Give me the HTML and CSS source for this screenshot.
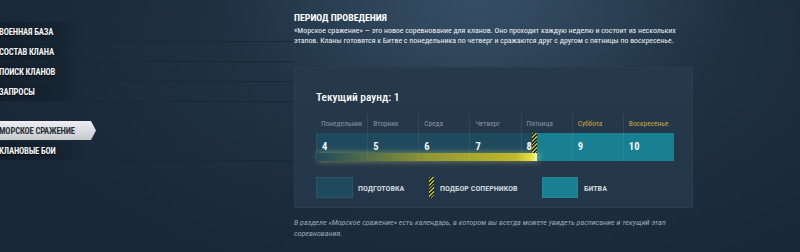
FILE: index.html
```html
<!DOCTYPE html>
<html lang="ru">
<head>
<meta charset="utf-8">
<title>Морское сражение</title>
<link rel="stylesheet" href="styles.css">
</head>
<body>
<div class="page">
  <nav class="nav">
    <div class="nav-group">
      <a class="nav-item">ВОЕННАЯ БАЗА</a>
      <a class="nav-item">СОСТАВ КЛАНА</a>
      <a class="nav-item">ПОИСК КЛАНОВ</a>
      <a class="nav-item">ЗАПРОСЫ</a>
    </div>
    <div class="nav-group">
      <a class="nav-item active">МОРСКОЕ СРАЖЕНИЕ</a>
      <a class="nav-item">КЛАНОВЫЕ БОИ</a>
    </div>
  </nav>
  <main class="content">
    <h2 class="heading">ПЕРИОД ПРОВЕДЕНИЯ</h2>
    <p class="lead">«Морское сражение» — это новое соревнование для кланов. Оно проходит каждую неделю и состоит из нескольких этапов. Кланы готовятся к Битве с понедельника по четверг и сражаются друг с другом с пятницы по воскресенье.</p>
    <section class="panel">
      <h3 class="round">Текущий раунд: 1</h3>
      <div class="calendar">
        <div class="days">
          <div class="day">Понедельник</div>
          <div class="day">Вторник</div>
          <div class="day">Среда</div>
          <div class="day">Четверг</div>
          <div class="day">Пятница</div>
          <div class="day weekend">Суббота</div>
          <div class="day weekend">Воскресенье</div>
        </div>
        <div class="bar">
          <div class="progress"></div>
          <div class="hatch"></div>
          <div class="num">4</div>
          <div class="num">5</div>
          <div class="num">6</div>
          <div class="num">7</div>
          <div class="num">8</div>
          <div class="num">9</div>
          <div class="num">10</div>
        </div>
      </div>
      <div class="legend">
        <div class="legend-item"><span class="swatch prep"></span><span class="legend-label">ПОДГОТОВКА</span></div>
        <div class="legend-item"><span class="swatch match"></span><span class="legend-label">ПОДБОР СОПЕРНИКОВ</span></div>
        <div class="legend-item"><span class="swatch battle"></span><span class="legend-label">БИТВА</span></div>
      </div>
    </section>
    <p class="note">В разделе «Морское сражение» есть календарь, в котором вы всегда можете увидеть расписание и текущий этап соревнования.</p>
  </main>
</div>
</body>
</html>
```

FILE: styles.css
```css
* { box-sizing: border-box; margin: 0; padding: 0; }

html, body {
  width: 800px;
  height: 252px;
  overflow: hidden;
}

body {
  font-family: "Roboto Condensed", "Liberation Sans Narrow", "DejaVu Sans Condensed", Roboto, sans-serif;
  color: #fff;
  background:
    radial-gradient(ellipse 260px 150px at 480px -10px, rgba(70, 100, 125, 0.55), rgba(70, 100, 125, 0) 100%),
    radial-gradient(ellipse 500px 260px at 470px 40px, rgba(45, 70, 92, 0.6), rgba(45, 70, 92, 0) 100%),
    #192736;
}

.page {
  display: flex;
  height: 252px;
}

/* NAV */
.nav {
  width: 294px;
  flex: none;
  padding-top: 22px;
  display: flex;
  flex-direction: column;
  gap: 19px;
}

.nav-group {
  display: flex;
  flex-direction: column;
}

.nav-item {
  display: flex;
  align-items: center;
  height: 20px;
  margin-left: -1px;
  font-size: 8.6px;
  font-weight: bold;
  letter-spacing: -0.15px;
  color: #f2f4f6;
  text-shadow: 0 1px 1px rgba(0, 0, 0, 0.6);
  background: linear-gradient(90deg, rgba(14, 24, 34, 0.55) 0, rgba(14, 24, 34, 0.35) 60px, rgba(14, 24, 34, 0) 85px);
  border-bottom: 1px solid rgba(25, 39, 54, 1);
}

.nav-item.active {
  width: 97px;
  height: 19px;
  color: #2b3036;
  text-shadow: none;
  background: linear-gradient(180deg, #eceef0 0, #d6d9dc 60%, #c4c8cc 100%);
  clip-path: polygon(0 0, 92px 0, 97px 50%, 92px 100%, 0 100%);
  border-bottom: none;
  margin-bottom: 1px;
}

/* CONTENT */
.content {
  width: 400px;
  padding-top: 12px;
}

.heading {
  font-size: 9.8px;
  font-weight: bold;
  color: #ffffff;
  line-height: 12px;
  margin-bottom: 2px;
}

.lead {
  font-size: 7.85px;
  line-height: 10px;
  color: #eef1f4;
  width: 400px;
}

.panel {
  margin-top: 21px;
  width: 399px;
  height: 141px;
  padding: 21px 20px 0 21px;
  background: linear-gradient(180deg, #26394b 0, #24374a 100%);
  border: 1px solid rgba(255, 255, 255, 0.03);
}

.round {
  font-size: 11.4px;
  font-weight: 500;
  line-height: 16px;
  color: #ffffff;
  margin-bottom: 9px;
}

.calendar {
  width: 358px;
}

.days, .bar {
  display: grid;
  grid-template-columns: repeat(7, 1fr);
}

.day {
  height: 19px;
  padding-left: 5px;
  font-size: 7.4px;
  line-height: 19px;
  color: #8793a0;
  border-left: 1px solid rgba(255, 255, 255, 0.07);
}

.day:first-child { border-left: none; }
.day.weekend { color: #cda53a; }

.bar {
  position: relative;
  height: 28px;
  background: linear-gradient(90deg, #1f4a5d 0, #1f4a5d 216px, #197f92 216px, #197f92 100%);
}

.num {
  position: relative;
  padding-left: 5px;
  font-size: 10.5px;
  font-weight: bold;
  line-height: 28px;
  color: #f4f6f8;
  border-left: 1px solid rgba(255, 255, 255, 0.06);
}

.num:first-of-type { border-left: none; }

.progress {
  position: absolute;
  left: 0;
  bottom: 0;
  width: 221px;
  height: 8px;
  background: linear-gradient(90deg, rgba(180, 175, 40, 0) 0, rgba(170, 165, 40, 0.3) 40px, rgba(180, 175, 40, 0.75) 110px, #bfb92c 200px, #e8e24a 216px, #fffbb0 221px);
  box-shadow: 2px 0 6px rgba(250, 240, 120, 0.45);
}

.hatch {
  position: absolute;
  left: 216px;
  top: 0;
  width: 5px;
  height: 20px;
  background: repeating-linear-gradient(135deg, #b9b035 0, #b9b035 1.2px, #1f2a22 1.2px, #1f2a22 2.6px);
}

/* LEGEND */
.legend {
  display: flex;
  margin-top: 16px;
}

.legend-item {
  width: 113px;
  display: flex;
  align-items: center;
}

.swatch {
  height: 21px;
  flex: none;
}

.swatch.prep { width: 37px; background: #1f4a5d; border: 1px solid rgba(255,255,255,0.06); margin-right: 5px; }
.swatch.match {
  width: 5px;
  margin-right: 6px;
  background: repeating-linear-gradient(135deg, #b9b035 0, #b9b035 1.2px, #1f2a22 1.2px, #1f2a22 2.6px);
}
.swatch.battle { width: 36px; background: #197f92; border: 1px solid rgba(255,255,255,0.06); margin-right: 6px; }

.legend-label {
  font-size: 8.1px;
  font-weight: bold;
  color: #c9d0d6;
  white-space: nowrap;
}

.note {
  margin-top: 9px;
  font-size: 8.05px;
  line-height: 11px;
  font-style: italic;
  color: #9aa6b2;
  width: 400px;
}
```
